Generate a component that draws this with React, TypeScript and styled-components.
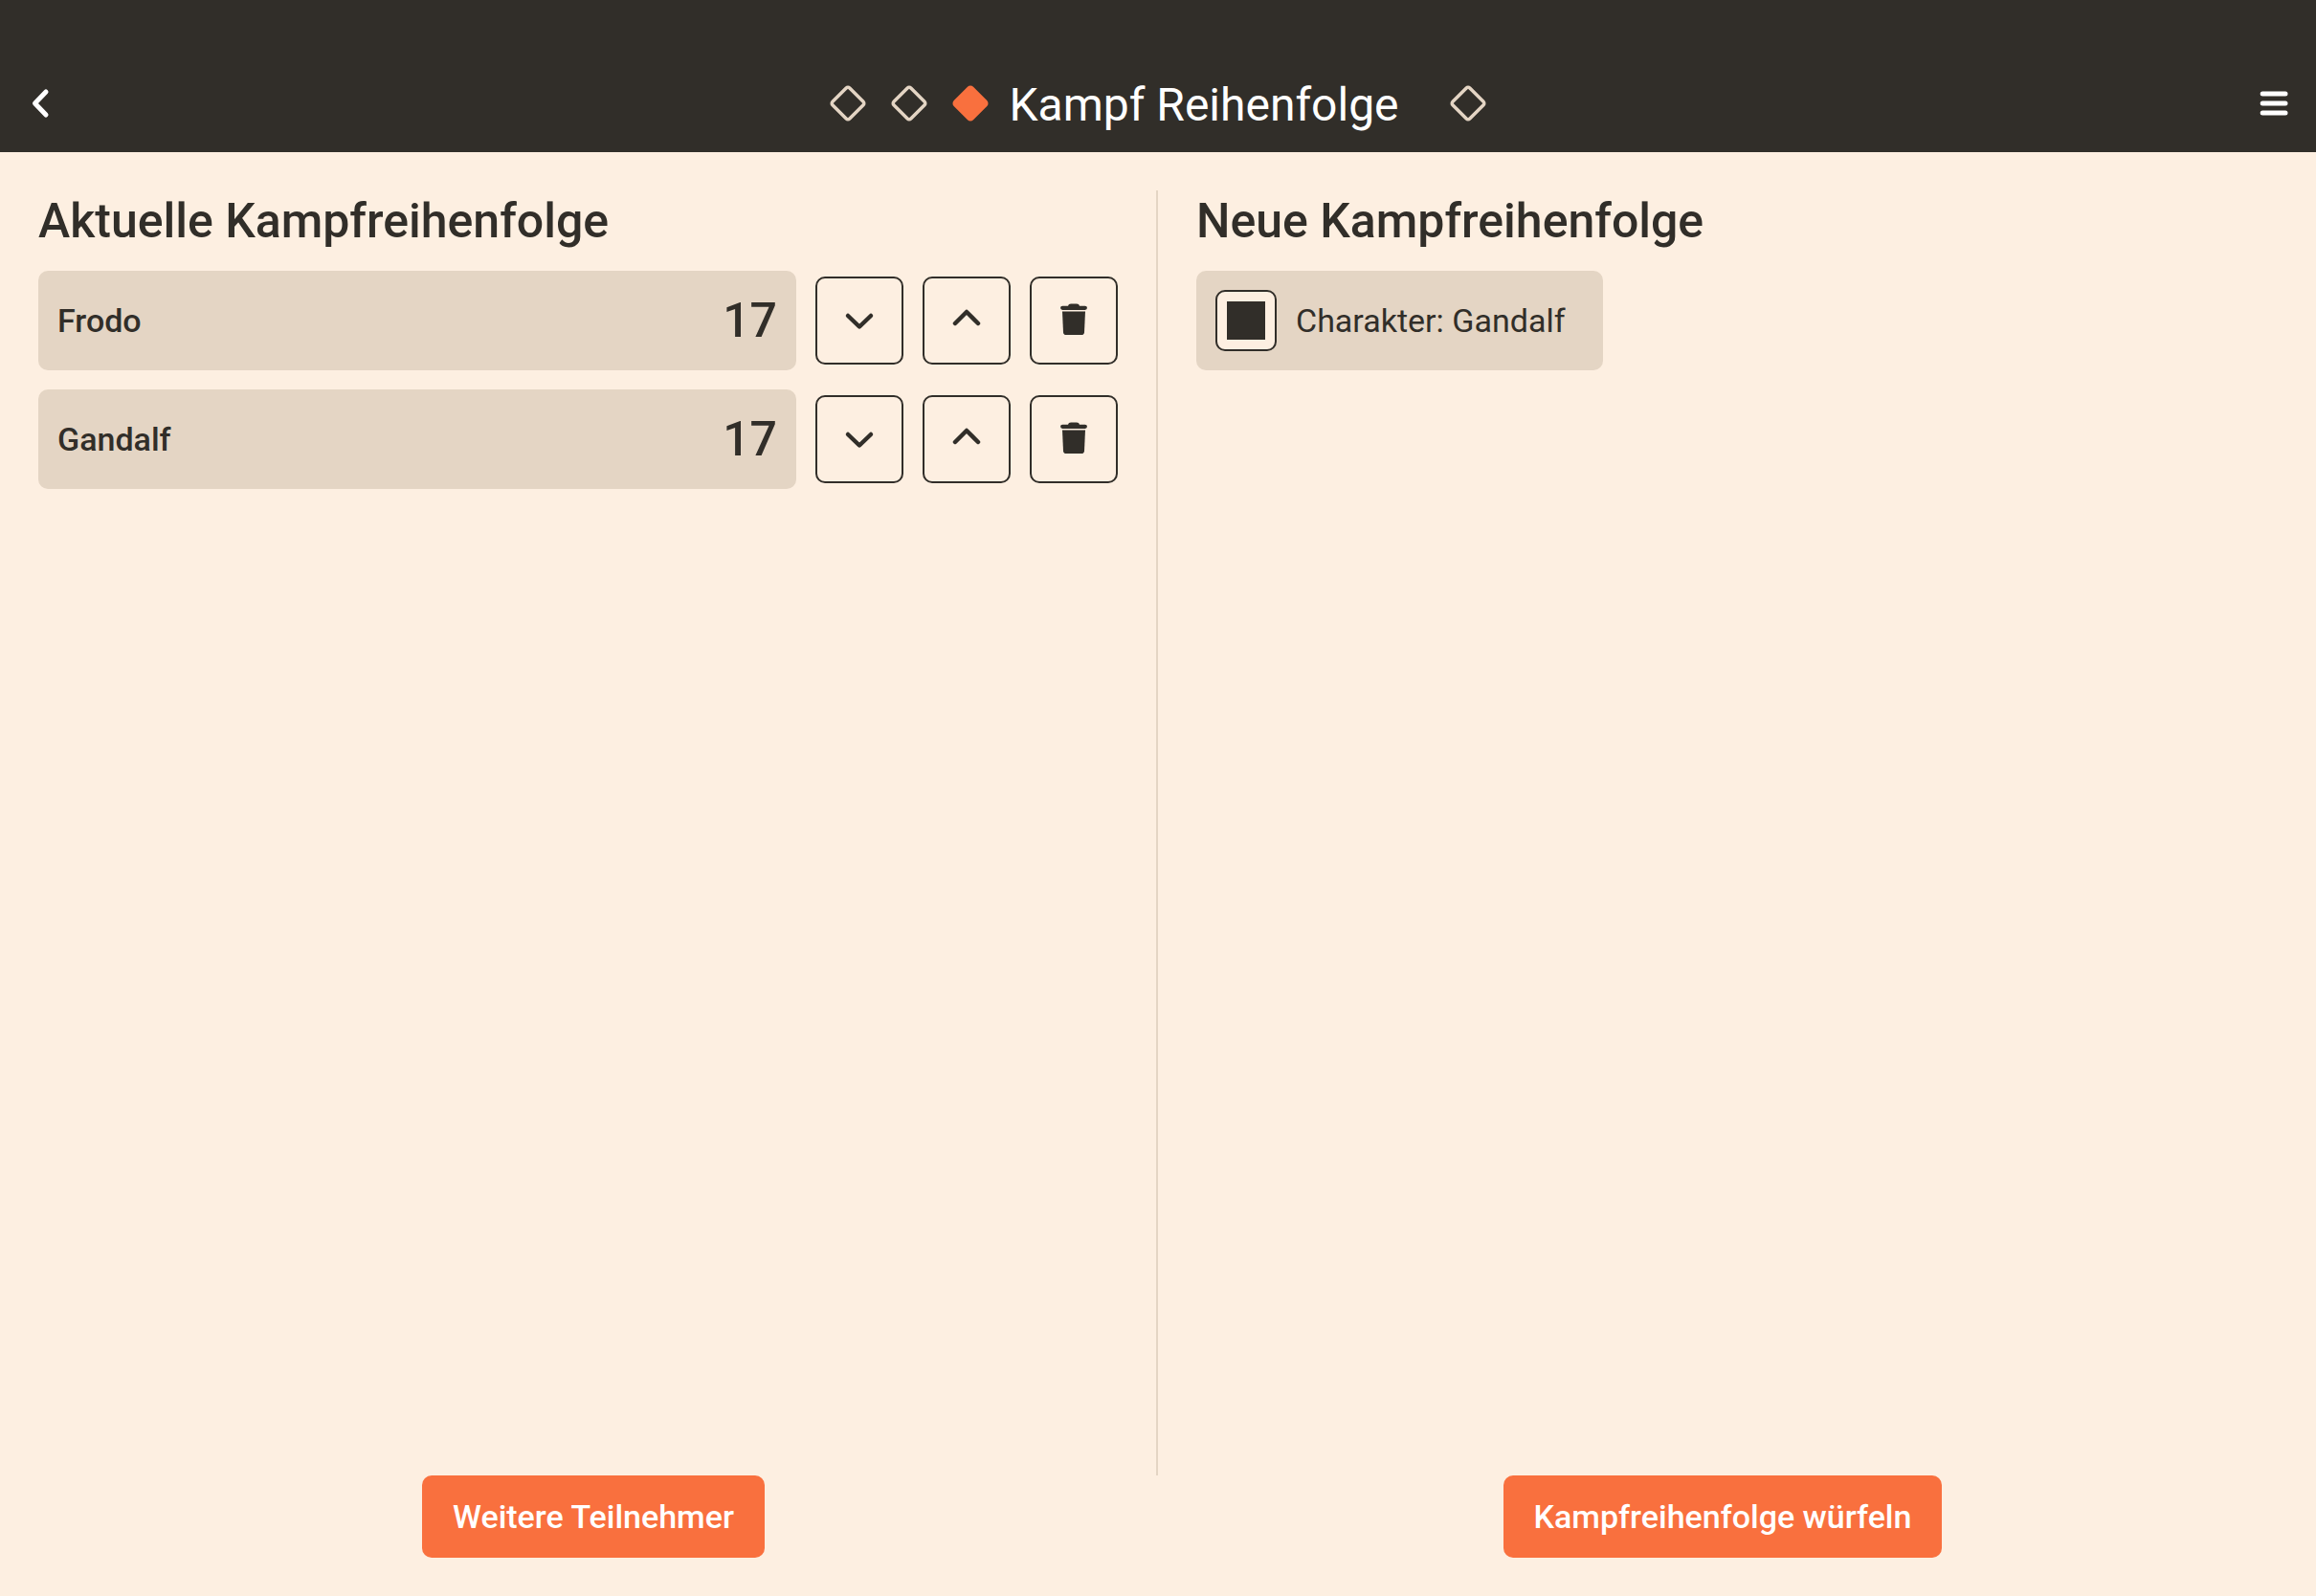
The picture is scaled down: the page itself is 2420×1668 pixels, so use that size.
import React, { useState } from "react";
import styled, { createGlobalStyle } from "styled-components";

const ink = "#312e29";
const paper = "#fdefe1";
const sand = "#e4d5c4";
const accent = "#f9703e";

const GlobalStyle = createGlobalStyle`
  *, *::before, *::after { box-sizing: border-box; }
  body {
    margin: 0;
    background: ${paper};
    color: ${ink};
    font-family: Roboto, "Liberation Sans", sans-serif;
    font-size: 34px;
    line-height: 40px;
  }
  button { font: inherit; cursor: pointer; }
`;

const Page = styled.div`
  display: flex;
  flex-direction: column;
  min-height: 100vh;
`;

const Header = styled.header`
  display: grid;
  grid-template-columns: 1fr auto 1fr;
  align-items: center;
  padding: 74px 28px 17px;
  background: ${ink};
  color: #fff;
`;

const HeaderButton = styled.button<{ $end?: boolean }>`
  display: flex;
  justify-self: ${(p) => (p.$end ? "end" : "start")};
  padding: 0;
  border: 0;
  background: none;
  color: inherit;
`;

const Steps = styled.nav`
  display: flex;
  align-items: center;
  gap: 24px;
`;

const Step = styled.button`
  display: flex;
  padding: 0;
  border: 0;
  background: none;
`;

const CurrentStep = styled.div`
  display: flex;
  align-items: center;
  gap: 20px;
  padding-right: 28px;
`;

const Title = styled.h1`
  margin: 0;
  padding-top: 4px;
  font-size: 48px;
  font-weight: 400;
  line-height: 64px;
`;

const Columns = styled.main`
  display: grid;
  grid-template-columns: 1fr 1fr;
  flex: 1;
  padding-top: 40px;
`;

const Column = styled.section<{ $divided?: boolean }>`
  padding: 0 40px;
  border-right: ${(p) => (p.$divided ? `2px solid ${sand}` : "0")};
`;

const Heading = styled.h2`
  margin: 0 0 20px;
  font-size: 50px;
  font-weight: 500;
  line-height: 64px;
`;

const List = styled.ul`
  display: flex;
  flex-direction: column;
  gap: 20px;
  margin: 0;
  padding: 0;
  list-style: none;
`;

const Row = styled.li`
  display: flex;
  align-items: center;
  gap: 20px;
`;

const Entry = styled.div`
  display: flex;
  flex: 1;
  align-items: center;
  justify-content: space-between;
  height: 104px;
  padding: 0 20px;
  border-radius: 10px;
  background: ${sand};
`;

const Name = styled.span`
  font-weight: 500;
`;

const Score = styled.span`
  font-size: 50px;
  font-weight: 500;
`;

const IconButton = styled.button`
  display: flex;
  align-items: center;
  justify-content: center;
  width: 92px;
  height: 92px;
  padding: 0;
  border: 2px solid ${ink};
  border-radius: 10px;
  background: none;
  color: inherit;
`;

const Choice = styled.label`
  display: inline-flex;
  align-items: center;
  gap: 20px;
  height: 104px;
  padding: 0 40px 0 20px;
  border-radius: 10px;
  background: ${sand};
`;

const Tick = styled.input`
  appearance: none;
  display: grid;
  place-items: center;
  width: 64px;
  height: 64px;
  margin: 0;
  border: 2px solid ${ink};
  border-radius: 10px;
  background: ${paper};
  &:checked::before {
    content: "";
    width: 40px;
    height: 40px;
    background: ${ink};
  }
`;

const Footer = styled.footer`
  display: grid;
  grid-template-columns: 1fr 1fr;
  gap: 20px;
  justify-items: center;
  padding: 0 40px 40px;
`;

const Action = styled.button`
  height: 86px;
  padding: 0 32px;
  border: 0;
  border-radius: 10px;
  background: ${accent};
  color: #fff;
  font-weight: 500;
`;

function Diamond({ filled }: { filled?: boolean }) {
  const color = filled ? accent : sand;
  return (
    <svg width="40" height="40" viewBox="0 0 40 40" aria-hidden="true">
      <rect
        x="7.4"
        y="7.4"
        width="25.2"
        height="25.2"
        rx="2.5"
        transform="rotate(45 20 20)"
        fill={filled ? color : "none"}
        stroke={color}
        strokeWidth="3.5"
      />
    </svg>
  );
}

function Chevron({ path }: { path: string }) {
  return (
    <svg width="40" height="40" viewBox="0 0 40 40" fill="none" stroke="currentColor" strokeWidth="4.5" strokeLinecap="round" strokeLinejoin="round" aria-hidden="true">
      <path d={path} />
    </svg>
  );
}

function Trash() {
  return (
    <svg width="40" height="40" viewBox="0 0 40 40" fill="currentColor" aria-hidden="true">
      <path d="M14 4.700 Q14.400 2.400 17 2.400 H23 Q25.600 2.400 26 4.700 H31.800 A2.150 2.150 0 0 1 31.800 9 H8.200 A2.150 2.150 0 0 1 8.200 4.700 Z" />
      <path d="M8 10.400 H32 L31 32.200 Q30.800 35 28 35 H12 Q9.200 35 9 32.200 Z" />
    </svg>
  );
}

const fighters = [
  { name: "Frodo", score: 17 },
  { name: "Gandalf", score: 17 },
];

export default function App() {
  const [picked, setPicked] = useState(true);
  return (
    <Page>
      <GlobalStyle />
      <Header>
        <HeaderButton aria-label="Zurück">
          <svg width="28" height="36" viewBox="0 0 28 36" fill="none" stroke="currentColor" strokeWidth="5" strokeLinecap="round" strokeLinejoin="round" aria-hidden="true">
            <path d="M20 6 L8.500 18 L20 30" />
          </svg>
        </HeaderButton>
        <Steps aria-label="Schritte">
          <Step aria-label="Schritt 1"><Diamond /></Step>
          <Step aria-label="Schritt 2"><Diamond /></Step>
          <CurrentStep>
            <Diamond filled />
            <Title>Kampf Reihenfolge</Title>
          </CurrentStep>
          <Step aria-label="Schritt 4"><Diamond /></Step>
        </Steps>
        <HeaderButton $end aria-label="Menü">
          <svg width="32" height="32" viewBox="0 0 32 32" stroke="currentColor" strokeWidth="5" strokeLinecap="round" aria-hidden="true">
            <path d="M4.200 6 H28 M4.200 16 H28 M4.200 26 H28" />
          </svg>
        </HeaderButton>
      </Header>
      <Columns>
        <Column $divided>
          <Heading>Aktuelle Kampfreihenfolge</Heading>
          <List>
            {fighters.map((f) => (
              <Row key={f.name}>
                <Entry>
                  <Name>{f.name}</Name>
                  <Score>{f.score}</Score>
                </Entry>
                <IconButton aria-label={`${f.name} nach unten`}><Chevron path="M8 15 L20 26.500 L32 15" /></IconButton>
                <IconButton aria-label={`${f.name} nach oben`}><Chevron path="M8 23 L20 11 L32 23" /></IconButton>
                <IconButton aria-label={`${f.name} löschen`}><Trash /></IconButton>
              </Row>
            ))}
          </List>
        </Column>
        <Column>
          <Heading>Neue Kampfreihenfolge</Heading>
          <Choice>
            <Tick type="checkbox" checked={picked} onChange={() => setPicked(!picked)} />
            <span>Charakter: Gandalf</span>
          </Choice>
        </Column>
      </Columns>
      <Footer>
        <Action>Weitere Teilnehmer</Action>
        <Action>Kampfreihenfolge würfeln</Action>
      </Footer>
    </Page>
  );
}
